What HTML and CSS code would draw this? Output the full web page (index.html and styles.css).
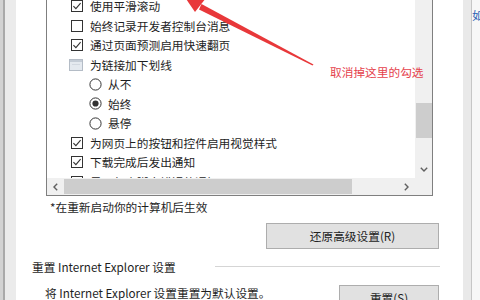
FILE: index.html
```html
<!DOCTYPE html>
<html lang="zh-CN">
<head>
<meta charset="utf-8">
<title>Internet 选项 - 高级</title>
<link rel="stylesheet" href="styles.css">
</head>
<body>
<div class="edge-left"><div class="edge-left-inner"></div></div>

<main class="dialog">
  <div class="listbox">
    <div class="list-content">
      <div class="row"><svg class="cb" viewBox="0 0 12 12"><rect x="0.5" y="0.5" width="11" height="11" fill="#fff" stroke="#333"/><path d="M2.4 6.1 L4.9 8.6 L9.6 3.2" fill="none" stroke="#333" stroke-width="1.1"/></svg><span>使用平滑滚动</span></div>
      <div class="row"><svg class="cb" viewBox="0 0 12 12"><rect x="0.5" y="0.5" width="11" height="11" fill="#fff" stroke="#333"/></svg><span>始终记录开发者控制台消息</span></div>
      <div class="row"><svg class="cb" viewBox="0 0 12 12"><rect x="0.5" y="0.5" width="11" height="11" fill="#fff" stroke="#333"/><path d="M2.4 6.1 L4.9 8.6 L9.6 3.2" fill="none" stroke="#333" stroke-width="1.1"/></svg><span>通过页面预测启用快速翻页</span></div>
      <div class="row row-group"><svg class="grp" viewBox="0 0 14 12"><rect x="0.5" y="0.5" width="13" height="11" fill="#e4e9ef" stroke="#b4bcc6"/><rect x="1" y="1" width="12" height="2" fill="#c4ccd6"/><path d="M3 5.5 H11" stroke="#d2d8e0"/></svg><span>为链接加下划线</span></div>
      <div class="row row-radio"><svg class="rb" viewBox="0 0 13 13"><circle cx="6.5" cy="6.5" r="5.6" fill="#fff" stroke="#333"/></svg><span>从不</span></div>
      <div class="row row-radio"><svg class="rb" viewBox="0 0 13 13"><circle cx="6.5" cy="6.5" r="5.6" fill="#fff" stroke="#333"/><circle cx="6.5" cy="6.5" r="3.1" fill="#333"/></svg><span>始终</span></div>
      <div class="row row-radio"><svg class="rb" viewBox="0 0 13 13"><circle cx="6.5" cy="6.5" r="5.6" fill="#fff" stroke="#333"/></svg><span>悬停</span></div>
      <div class="row"><svg class="cb" viewBox="0 0 12 12"><rect x="0.5" y="0.5" width="11" height="11" fill="#fff" stroke="#333"/><path d="M2.4 6.1 L4.9 8.6 L9.6 3.2" fill="none" stroke="#333" stroke-width="1.1"/></svg><span>为网页上的按钮和控件启用视觉样式</span></div>
      <div class="row"><svg class="cb" viewBox="0 0 12 12"><rect x="0.5" y="0.5" width="11" height="11" fill="#fff" stroke="#333"/><path d="M2.4 6.1 L4.9 8.6 L9.6 3.2" fill="none" stroke="#333" stroke-width="1.1"/></svg><span>下载完成后发出通知</span></div>
      <div class="row"><svg class="cb" viewBox="0 0 12 12"><rect x="0.5" y="0.5" width="11" height="11" fill="#fff" stroke="#333"/></svg><span>显示每个脚本错误的通知</span></div>
    </div>
    <div class="vscroll">
      <div class="vthumb"></div>
      <svg class="arrow-down" viewBox="0 0 8 5"><path d="M0.8 0.8 L4 4 L7.2 0.8" fill="none" stroke="#606060" stroke-width="1.4"/></svg>
    </div>
    <div class="hscroll">
      <div class="harrow"><svg viewBox="0 0 5 8" class="arr-h"><path d="M4.2 0.8 L1 4 L4.2 7.2" fill="none" stroke="#606060" stroke-width="1.4"/></svg></div>
      <div class="hthumb"></div>
      <div class="harrow harrow-right"><svg viewBox="0 0 5 8" class="arr-h"><path d="M0.8 0.8 L4 4 L0.8 7.2" fill="none" stroke="#606060" stroke-width="1.4"/></svg></div>
    </div>
    <div class="corner"></div>
  </div>

  <p class="note">*在重新启动你的计算机后生效</p>

  <div class="btn-row">
    <button class="btn btn-wide">还原高级设置(R)</button>
  </div>

  <div class="section-head">
    <span>重置 Internet Explorer 设置</span>
    <div class="section-line"></div>
  </div>

  <div class="reset-row">
    <span class="reset-text">将 Internet Explorer 设置重置为默认设置。</span>
    <button class="btn btn-reset">重置(S)</button>
  </div>
</main>

<div class="edge-right">
  <div class="edge-right-band"></div>
  <div class="edge-right-page"><span class="link-char">如</span></div>
</div>

<svg class="annot-arrow" viewBox="0 0 480 300" width="480" height="300">
  <polygon points="313.5,64.5 312.5,65.5 199,9.5 201.5,4" fill="#e8383a"/>
  <polygon points="182,-7 206,-2 195,12" fill="#e8383a"/>
</svg>
<div class="annot-text">取消掉这里的勾选</div>
</body>
</html>
```

FILE: styles.css
```css
* { box-sizing: border-box; }

html, body {
  margin: 0;
  padding: 0;
}

body {
  width: 480px;
  height: 300px;
  overflow: hidden;
  display: flex;
  position: relative;
  background: #ffffff;
  font-family: "Noto Sans CJK SC", "Noto Sans", sans-serif;
  font-size: 11.7px;
  color: #1e1e1e;
}

.edge-left {
  width: 16px;
  flex: none;
  background: #d2d2d2;
  padding-left: 3px;
}

.edge-left-inner {
  height: 100%;
  background: #ebebeb;
  border-left: 2px solid #a9a9a9;
}

.dialog {
  width: 447px;
  flex: none;
  display: flex;
  flex-direction: column;
  background: #ffffff;
}

.listbox {
  margin-top: -6px;
  margin-left: 30px;
  width: 387px;
  height: 202px;
  flex: none;
  border: 1px solid #7f7f7f;
  display: grid;
  grid-template-columns: 1fr 17px;
  grid-template-rows: 1fr 17px;
  background: #fff;
}

.list-content {
  overflow: hidden;
  padding-top: 1.25px;
  padding-left: 24px;
}

.row {
  height: 19.5px;
  display: flex;
  align-items: center;
  white-space: nowrap;
  line-height: 1;
}

.cb {
  width: 12px;
  height: 12px;
  flex: none;
  margin-right: 7px;
}

.grp {
  width: 14px;
  height: 12px;
  flex: none;
  margin-left: -2px;
  margin-right: 7px;
}

.row-radio {
  padding-left: 18px;
}

.rb {
  width: 13px;
  height: 13px;
  flex: none;
  margin-right: 6px;
}

.vscroll {
  background: #f0f0f0;
  display: flex;
  flex-direction: column;
  align-items: center;
}

.vthumb {
  margin-top: 108px;
  width: 16px;
  height: 35px;
  background: #cdcdcd;
}

.arrow-down {
  margin-top: auto;
  margin-bottom: 6px;
  width: 8px;
  height: 5px;
}

.hscroll {
  background: #f0f0f0;
  display: flex;
  align-items: center;
}

.harrow {
  width: 17px;
  height: 17px;
  flex: none;
  display: flex;
  align-items: center;
  justify-content: center;
}

.harrow-right {
  margin-left: auto;
}

.arr-h {
  width: 5px;
  height: 8px;
}

.hthumb {
  width: 288px;
  height: 15px;
  background: #cdcdcd;
}

.corner {
  background: #f0f0f0;
}

.note {
  margin: 4px 0 0 34px;
  line-height: 14px;
  height: 14px;
}

.btn-row {
  margin-top: 9px;
  display: flex;
  justify-content: flex-end;
  padding-right: 24px;
}

.btn {
  font-family: inherit;
  font-size: 11.7px;
  color: #222;
  background: #e1e1e1;
  border: 1px solid #adadad;
  height: 26px;
  padding: 0;
  line-height: 1;
}

.btn-wide {
  width: 173px;
}

.section-head {
  margin-top: 10px;
  padding-left: 16px;
  padding-right: 23px;
  display: flex;
  align-items: center;
  justify-content: space-between;
  line-height: 16px;
  height: 16px;
}

.section-line {
  width: 225px;
  height: 1px;
  background: #d5d5d5;
  margin-top: -2px;
}

.reset-row {
  margin-top: 10px;
  padding-left: 29px;
  padding-right: 24px;
  display: flex;
  align-items: flex-start;
  justify-content: space-between;
}

.reset-text {
  line-height: 16px;
}

.btn-reset {
  width: 100px;
}

.edge-right {
  flex: 1;
  display: flex;
}

.edge-right-band {
  width: 9px;
  flex: none;
  background: #e9e9e9;
  border-right: 1px solid #c6c6c6;
}

.edge-right-page {
  flex: 1;
  background: #f7f7f7;
  padding-top: 8px;
  overflow: hidden;
}

.link-char {
  display: block;
  color: #2b5fb3;
  line-height: 14px;
  white-space: nowrap;
}

.annot-arrow {
  position: absolute;
  left: 0;
  top: 0;
  pointer-events: none;
}

.annot-text {
  position: absolute;
  left: 330px;
  top: 64px;
  line-height: 16px;
  color: #e5414c;
  white-space: nowrap;
}
```
